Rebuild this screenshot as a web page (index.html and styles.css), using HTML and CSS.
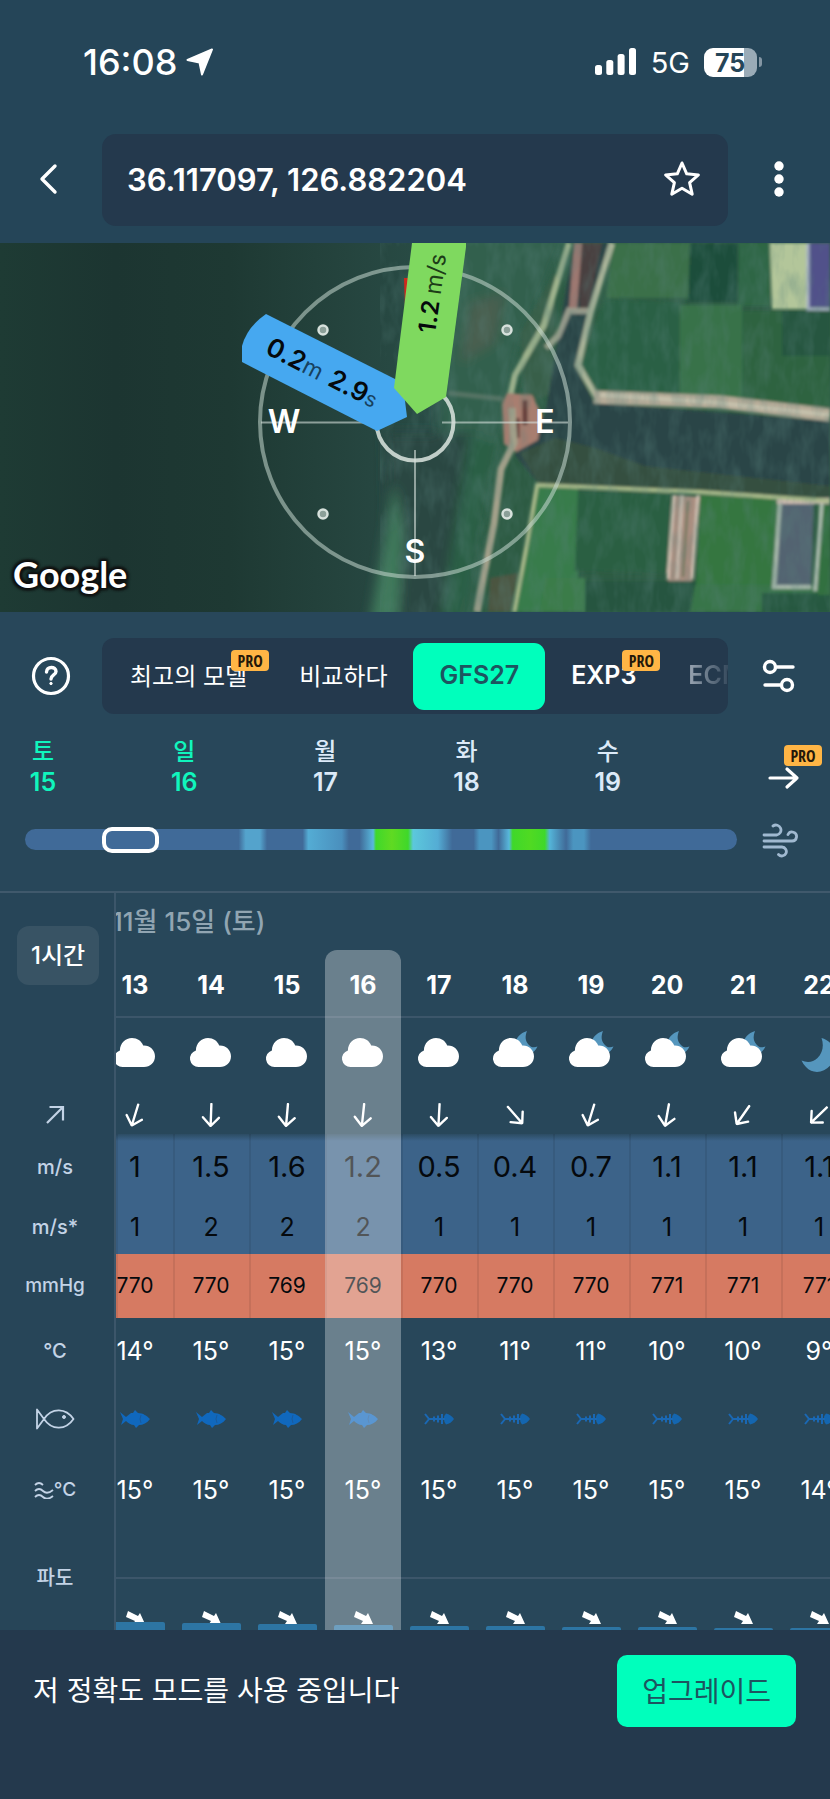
FILE: index.html
```html
<!DOCTYPE html>
<html lang="ko">
<head>
<meta charset="utf-8">
<meta name="viewport" content="width=device-width, initial-scale=1">
<title>36.117097, 126.882204</title>
<link rel="stylesheet" href="styles.css">
</head>
<body>
<svg class="defs" aria-hidden="true">
  <symbol id="cloud" viewBox="0 0 52 44"><path fill="#fff" d="M13.500 37A8.500 8.500 0 0 1 10.900 20.400C11 13.200 16.500 8 23 8c5.300 0 9.400 3 11.200 7.400C40.600 15 46 19.800 46 26.200S41 37 35 37z"/></symbol>
  <symbol id="cloud-moon" viewBox="0 0 52 44"><path fill="#5596bd" d="M38 1C31 3 27 8 26 14L40 25Q46 22 48.500 16.500C45 18 42 17.500 39.500 14.500C36 10.500 36 6 38 1z"/><path fill="#fff" d="M12.500 37A8.500 8.500 0 0 1 9.900 20.400C10 13.200 15.500 8 22 8c5.300 0 9.400 3 11.200 7.400C39.600 15 45 19.800 45 26.200S40 37 34 37z"/></symbol>
  <symbol id="moon" viewBox="0 0 52 44"><path fill="#5596bd" d="M28.500 8C39 11 44 20 40.500 30C36 42 21 46 13 37Q10 34 8.500 30.500C14 33 20 32.500 24.500 28C30 22.500 31 15 28.500 8z"/></symbol>
  <symbol id="arrow" viewBox="0 0 24 24"><path fill="none" stroke="#fff" stroke-width="2.400" stroke-linecap="round" stroke-linejoin="round" d="M12 1v22M4 14.500l8 8.500 8-8.500"/></symbol>
  <symbol id="fish" viewBox="0 0 30 18"><path fill="#1068bd" d="M0 2l6 5 5-4 2 0 2-3 3 3c5 0 9 3 12 6-3 4-7 6-11 6l-3 3-2-3c-3 0-6-2-8-4l-5 4 2-6z"/><path stroke="#1a5a9c" stroke-width="1" d="M21 5q-2 4 0 8" fill="none"/></symbol>
  <symbol id="bone" viewBox="0 0 30 18"><path fill="#1466b0" d="M20 9q0-4 2-5.500q5 1 8 5.500q-3 4.500-8 5.500q-2-1.500-2-5.500z"/><path stroke="#1a68b4" stroke-width="2" d="M1 4l4 5-4 5M5 9h16M10 6.500v5M14 5.500v7M18 4v10" fill="none"/></symbol>
  <symbol id="swell" viewBox="0 0 24 16"><path fill="#fff" d="M5 2l10 5 2-3 5 11-12 0 2-3-9-4z"/></symbol>
</svg>

<header class="top">
  <div class="status">
    <div class="clock">16:08
      <svg width="28" height="28" viewBox="0 0 28 28"><path fill="#fff" stroke="#fff" stroke-width="2" stroke-linejoin="round" d="M26 1.500L16 26.500 13.500 14.500 1.500 12z"/></svg>
    </div>
    <div class="signals">
      <svg width="41" height="28" viewBox="0 0 41 28" fill="#fff"><rect y="17" width="7" height="10" rx="2.500"/><rect x="11.300" y="12" width="7" height="15" rx="2.500"/><rect x="22.600" y="6" width="7" height="21" rx="2.500"/><rect x="34" width="7" height="27" rx="2.500"/></svg>
      <span class="net">5G</span>
      <span class="battery">75</span><span class="nub"></span>
    </div>
  </div>
  <div class="bar">
    <button class="icon" aria-label="뒤로"><svg width="20" height="32" viewBox="0 0 20 32"><path fill="none" stroke="#fff" stroke-width="3.400" stroke-linecap="round" stroke-linejoin="round" d="M17 3L4 16l13 13"/></svg></button>
    <div class="place"><span>36.117097, 126.882204</span>
      <button class="icon" aria-label="즐겨찾기"><svg width="38" height="38" viewBox="0 0 38 38"><path fill="none" stroke="#fff" stroke-width="3" stroke-linejoin="round" d="M19 3l4.700 10.800 11.700 1.100-8.800 7.800 2.600 11.500L19 28.200 8.800 34.200l2.600-11.500-8.800-7.800 11.700-1.100z"/></svg></button>
    </div>
    <button class="icon" aria-label="메뉴"><svg width="12" height="36" viewBox="0 0 12 36" fill="#fff"><circle cx="6" cy="5" r="4.700"/><circle cx="6" cy="18" r="4.700"/><circle cx="6" cy="31" r="4.700"/></svg></button>
  </div>
</header>

<section class="map" aria-label="지도">
<svg viewBox="0 0 830 369" preserveAspectRatio="xMidYMid slice" font-family="Inter, sans-serif">
  <defs>
    <linearGradient id="sea"><stop offset="0" stop-color="#1e3b34"/><stop offset=".25" stop-color="#1c3531"/><stop offset=".5" stop-color="#1e3933"/><stop offset=".8" stop-color="#264640"/><stop offset="1" stop-color="#2a4f48"/></linearGradient>
    <filter id="soft" x="-5%" y="-5%" width="110%" height="110%"><feGaussianBlur stdDeviation="1.400"/></filter>
    <filter id="softer" x="-20%" y="-20%" width="140%" height="140%"><feGaussianBlur stdDeviation="6"/></filter>
    <filter id="grain" x="0" y="0" width="100%" height="100%"><feTurbulence type="fractalNoise" baseFrequency=".07 .03" numOctaves="3" seed="4"/><feColorMatrix values="0 0 0 0 .1  0 0 0 0 .22  0 0 0 0 .2  1.800 0 0 0 -.7"/></filter>
  </defs>
  <rect width="830" height="369" fill="#2d5b43"/>
  <rect width="460" height="369" fill="url(#sea)"/>
  <g filter="url(#softer)">
    <path fill="#31604e" d="M440-10H570L520 110 490 260 470 380H440z"/>
    <path fill="#4a5f50" d="M470 60l35-10-10 50-35 20z"/>
    <path fill="#2c4742" d="M385 190h95l-10 80-30 110h-50z"/>
    <path fill="#3f7a5c" d="M395 240l8 50-5 90h-28l14-80z"/>
    <path fill="#2b5f45" d="M470 190l30 10-20 90-20 90h-20z"/>
  </g>
  <g filter="url(#soft)">
    <path fill="#375f49" d="M520 90l35-60v120l-30 10z"/>
    <path fill="#2c4447" d="M574 0h36L590 70 576 125l18 35 236 18v76l-290-12-25-30 30-40z"/>
    <path fill="#35503f" d="M520 210l35-15 40 10 50 18 185 20v12l-290-12z"/>
    <path fill="#3b704a" d="M613 0h77v55h-84z"/>
    <path fill="#1e4d3b" d="M690 0h48v59h-50z"/>
    <path fill="#2e6644" d="M738 0h32v63h-32z"/>
    <path fill="#b3c69a" d="M770 0h37v66h-35z"/>
    <path fill="#51518a" d="M809 0h21v64h-21z"/>
    <path fill="none" stroke="#aab3c6" stroke-width="3" d="M808 0v66h22"/>
    <path fill="#2b6144" d="M604 56l76 3v93l-82-3-18-25z"/>
    <path fill="#377248" d="M680 62h62v93h-62z"/>
    <path fill="#2e6441" d="M742 68h88v96l-88-7z"/>
    <path fill="#265741" d="M782 68h48v45h-48z"/>
    <path fill="#397b4b" d="M538 244l40 2v123h-62z"/>
    <path fill="#295f42" d="M578 248l92 2-3 80-92-2z"/>
    <path fill="#285541" d="M584 338h118v31H580z"/>
    <path fill="#3a7c48" d="M545 335h40v34h-45z"/>
    <path fill="#357641" d="M700 252l78 4-6 86h-76z"/>
    <path fill="#387548" d="M695 342h135v27H690z"/>
    <path fill="#25583f" d="M762 350h68v19h-68z"/>
    <path fill="#33703f" d="M818 262h12v90h-12z"/>
    <path fill="#a98e80" d="M673 252l27 2-8 84h-24z"/>
    <path stroke="#d3c2b4" stroke-width="3" d="M674 252l-6 84M682 252l-5 84M698 252l-6 84" fill="none"/>
    <path stroke="#667457" stroke-width="2" d="M688 258l-5 76" fill="none"/>
    <path fill="#536371" d="M780 258h34l-3 88h-38z"/>
    <path stroke="#a9b9ac" stroke-width="4" d="M780 258l-6 86h37M822 258l-7 90" fill="none"/>
    <path stroke="#c9b9af" stroke-width="6" d="M777 258h53" fill="none"/>
    <path fill="#49403f" d="M578 0h24l-14 68h-8z"/>
    <path stroke="#9d7871" stroke-width="8" d="M578 0l-5 66" fill="none"/>
    <path stroke="#b9b7a2" stroke-width="6" d="M568 68h22M570 65l-12 28-12 12" fill="none" opacity=".75"/>
    <path stroke="#9fb38d" stroke-width="6" fill="none" d="M569 0L544 82 515 132 509 158"/>
    <path stroke="#adb69a" stroke-width="6" fill="none" d="M612 0L591 68 578 122 596 153"/>
    <path stroke="#b6ab98" stroke-width="13" fill="none" d="M594 154L720 159 830 172"/>
    <path stroke="#c7c3ae" stroke-width="4" fill="none" d="M600 152L710 159 830 172"/>
    <path fill="#a87e70" d="M507 150l25 2 10 20-4 25-22 12-12-8-2-40z"/>
    <path stroke="#633b37" stroke-width="5" d="M525 157v25M517 175v20" fill="none"/>
    <path stroke="#a3a08a" stroke-width="7" fill="none" d="M512 165l2 35-13 26-7 55-11 55-6 33"/>
    <path stroke="#a8b98a" stroke-width="4" fill="none" d="M830 258L700 249 537 242 527 300 514 369"/>
    <path fill="#4c5541" d="M490 335l28-5-8 39h-22z"/>
    <path stroke="#6c8073" stroke-width="5" d="M448 150l55 6" fill="none" opacity=".6"/>
  </g>
  <rect x="380" width="450" height="369" filter="url(#grain)" opacity=".4"/>

  <g fill="none">
    <circle cx="415" cy="179" r="155" stroke="#c6d8d0" stroke-opacity=".55" stroke-width="4"/>
    <circle cx="415" cy="179" r="38.500" stroke="#dce5df" stroke-opacity=".85" stroke-width="4"/>
    <path stroke="#d5e0da" stroke-opacity=".6" stroke-width="2" d="M261 179.500H377M442 179.500H568M415 207V333"/>
    <g fill="#8b9f98" stroke="#d7e1dc" stroke-width="2.500"><circle cx="323" cy="87" r="4.500"/><circle cx="507" cy="87" r="4.500"/><circle cx="323" cy="271" r="4.500"/><circle cx="507" cy="271" r="4.500"/></g>
  </g>
  <path fill="#d0271c" d="M404 35h8v30h-7z"/>
  <path fill="#46a8f0" d="M266 71L395 136 404 150 407 174 377 188 242 119V103Q247 84 266 71z"/>
  <path fill="#7fd95f" d="M412 0H466V4L446 154 417 171 394 145z"/>
  <g fill="#fff" font-size="32" font-weight="600" text-anchor="middle"><text x="284" y="190">W</text><text x="545" y="190">E</text><text x="415" y="320">S</text></g>
  <g fill="#05090c" font-size="26"><text transform="translate(264 110) rotate(27)"><tspan font-weight="600">0.2</tspan><tspan font-size="23" fill="#17415f">m</tspan><tspan font-weight="600" dx="9">2.9</tspan><tspan font-size="21" fill="#17415f">s</tspan></text>
  <text transform="translate(435 91) rotate(-82)" font-size="24"><tspan font-weight="600">1.2</tspan><tspan font-size="23" fill="#1d3d18"> m/s</tspan></text></g>
</svg>
<span class="google">Google</span>
</section>

<section class="panel">
  <div class="bar models">
    <button class="icon" aria-label="도움말"><svg width="40" height="40" viewBox="0 0 40 40" fill="none" stroke="#fff"><circle cx="20" cy="20" r="17.500" stroke-width="3.200"/><path stroke-width="3.400" stroke-linecap="round" d="M15.500 16c0-6 9.500-6 9.500-.5 0 3.500-5 3.500-5 7.500"/><circle cx="20" cy="27.500" r="1.200" fill="#fff"/></svg></button>
    <div class="tabs">
      <button>최고의 모델<span class="pro">PRO</span></button><button>비교하다</button><button class="latin on">GFS27</button><button class="latin">EXP3<span class="pro">PRO</span></button><button class="latin last">ECMWF</button>
    </div>
    <button class="icon" aria-label="설정"><svg width="36" height="36" viewBox="0 0 36 36" fill="none" stroke="#fff" stroke-width="3.400" stroke-linecap="round"><circle cx="9" cy="9" r="5.500"/><path d="M16 9h16M4 27h15"/><circle cx="26" cy="27" r="5.500"/></svg></button>
  </div>
  <div class="timeline">
    <div class="days">
      <div class="we"><span>토</span><b>15</b></div><div class="we"><span>일</span><b>16</b></div><div><span>월</span><b>17</b></div><div><span>화</span><b>18</b></div><div><span>수</span><b>19</b></div>
    </div>
    <button class="icon next" aria-label="다음"><svg width="32" height="24" viewBox="0 0 32 24"><path fill="none" stroke="#fff" stroke-width="3.200" stroke-linecap="round" stroke-linejoin="round" d="M2 12h27M19 3l10 9-10 9"/></svg><span class="pro">PRO</span></button>
    <input type="range" min="0" max="1000" value="118" aria-label="시간">
    <button class="icon wind" aria-label="바람"><svg width="36" height="36" viewBox="0 0 36 36" fill="none" stroke="#a0b9d0" stroke-width="2.800" stroke-linecap="round"><path d="M2 13h12.500a5 5 0 1 0-3.500-9M2 19h28a4.500 4.500 0 1 0-4-6.500M2 25h18a4.500 4.500 0 1 1-3.500 7.500"/></svg></button>
  </div>
</section>

<main class="forecast">
<table>
  <colgroup><col class="c-label"><col class="c-first"><col span="9" class="c-hour"></colgroup>
  <tbody>
  <tr class="r-date"><th class="c-step" rowspan="2"><button class="step">1시간</button></th><td colspan="10"><div class="date">11월 15일 (토)</div></td></tr>
  <tr class="r-hour"><td><div>13</div></td><td><div>14</div></td><td><div>15</div></td><td><div>16</div></td><td><div>17</div></td><td><div>18</div></td><td><div>19</div></td><td><div>20</div></td><td><div>21</div></td><td><div>22</div></td></tr>
  <tr class="r-sky"><th></th><td><div><svg><use href="#cloud"/></svg></div></td><td><div><svg><use href="#cloud"/></svg></div></td><td><div><svg><use href="#cloud"/></svg></div></td><td><div><svg><use href="#cloud"/></svg></div></td><td><div><svg><use href="#cloud"/></svg></div></td><td><div><svg><use href="#cloud-moon"/></svg></div></td><td><div><svg><use href="#cloud-moon"/></svg></div></td><td><div><svg><use href="#cloud-moon"/></svg></div></td><td><div><svg><use href="#cloud-moon"/></svg></div></td><td><div><svg><use href="#moon"/></svg></div></td></tr>
  <tr class="r-dir"><th scope="row" aria-label="풍향"><svg width="20" height="20" viewBox="0 0 20 20"><path fill="none" stroke="#c3d3e6" stroke-width="2.200" d="M2 18L18 2M4.500 2H18v13.500"/></svg></th>
    <td><div><svg style="rotate:17deg"><use href="#arrow"/></svg></div></td><td><div><svg style="rotate:2deg"><use href="#arrow"/></svg></div></td><td><div><svg style="rotate:5deg"><use href="#arrow"/></svg></div></td><td><div><svg style="rotate:6deg"><use href="#arrow"/></svg></div></td><td><div><svg style="rotate:3deg"><use href="#arrow"/></svg></div></td><td><div><svg style="rotate:-41deg"><use href="#arrow"/></svg></div></td><td><div><svg style="rotate:17deg"><use href="#arrow"/></svg></div></td><td><div><svg style="rotate:10deg"><use href="#arrow"/></svg></div></td><td><div><svg style="rotate:35deg"><use href="#arrow"/></svg></div></td><td><div><svg style="rotate:46deg"><use href="#arrow"/></svg></div></td></tr>
  <tr class="r-wind"><th scope="row">m/s</th><td><div>1</div></td><td><div>1.5</div></td><td><div>1.6</div></td><td><div>1.2</div></td><td><div>0.5</div></td><td><div>0.4</div></td><td><div>0.7</div></td><td><div>1.1</div></td><td><div>1.1</div></td><td><div>1.1</div></td></tr>
  <tr class="r-gust"><th scope="row">m/s*</th><td><div>1</div></td><td><div>2</div></td><td><div>2</div></td><td><div>2</div></td><td><div>1</div></td><td><div>1</div></td><td><div>1</div></td><td><div>1</div></td><td><div>1</div></td><td><div>1</div></td></tr>
  <tr class="r-press"><th scope="row">mmHg</th><td><div>770</div></td><td><div>770</div></td><td><div>769</div></td><td><div>769</div></td><td><div>770</div></td><td><div>770</div></td><td><div>770</div></td><td><div>771</div></td><td><div>771</div></td><td><div>771</div></td></tr>
  <tr class="r-temp"><th scope="row">°C</th><td><div>14°</div></td><td><div>15°</div></td><td><div>15°</div></td><td><div>15°</div></td><td><div>13°</div></td><td><div>11°</div></td><td><div>11°</div></td><td><div>10°</div></td><td><div>10°</div></td><td><div>9°</div></td></tr>
  <tr class="r-fish"><th scope="row" aria-label="물고기"><svg width="40" height="22" viewBox="0 0 40 22" fill="none" stroke="#c3d3e6" stroke-width="1.800"><path stroke-linejoin="round" d="M2 1.500v19L9 11zM9 11C17-1 31 0 38.500 11 31 22 17 23 9 11z"/><circle cx="29" cy="9" r="1.500" fill="#c3d3e6" stroke-width="1"/></svg></th>
    <td><div><svg><use href="#fish"/></svg></div></td><td><div><svg><use href="#fish"/></svg></div></td><td><div><svg><use href="#fish"/></svg></div></td><td><div><svg><use href="#fish"/></svg></div></td><td><div><svg><use href="#bone"/></svg></div></td><td><div><svg><use href="#bone"/></svg></div></td><td><div><svg><use href="#bone"/></svg></div></td><td><div><svg><use href="#bone"/></svg></div></td><td><div><svg><use href="#bone"/></svg></div></td><td><div><svg><use href="#bone"/></svg></div></td></tr>
  <tr class="r-water"><th scope="row"><span class="sea"><svg width="20" height="18" viewBox="0 0 20 18" fill="none" stroke="#c3d3e6" stroke-width="1.800"><path d="M1 4q4-4 8 0M1 10q4-4 8 0t10-1M1 16q4-4 8 0t10-1"/></svg>°C</span></th><td><div>15°</div></td><td><div>15°</div></td><td><div>15°</div></td><td><div>15°</div></td><td><div>15°</div></td><td><div>15°</div></td><td><div>15°</div></td><td><div>15°</div></td><td><div>15°</div></td><td><div>14°</div></td></tr>
  <tr class="r-gap"><th scope="rowgroup" rowspan="2">파도</th><td colspan="10"></td></tr>
  <tr class="r-wave"><td><div><svg><use href="#swell"/></svg><i style="height:8px"></i></div></td><td><div><svg><use href="#swell"/></svg><i style="height:7px"></i></div></td><td><div><svg><use href="#swell"/></svg><i style="height:6px"></i></div></td><td><div><svg><use href="#swell"/></svg><i style="height:5px"></i></div></td><td><div><svg><use href="#swell"/></svg><i style="height:4px"></i></div></td><td><div><svg><use href="#swell"/></svg><i style="height:4px"></i></div></td><td><div><svg><use href="#swell"/></svg><i style="height:3px"></i></div></td><td><div><svg><use href="#swell"/></svg><i style="height:3px"></i></div></td><td><div><svg><use href="#swell"/></svg><i style="height:2px"></i></div></td><td><div><svg><use href="#swell"/></svg><i style="height:2px"></i></div></td></tr>
  </tbody>
</table>
<div class="now"></div>
</main>

<footer class="notice"><p>저 정확도 모드를 사용 중입니다</p><button>업그레이드</button></footer>
</body>
</html>
```
FILE: styles.css
```css
* { box-sizing: border-box; }
body {
  margin: 0;
  background: #24394d;
  color: #fff;
  font-family: Inter, "Noto Sans CJK KR", sans-serif;
  overflow-x: hidden;
}
button { font: inherit; color: inherit; background: none; border: 0; padding: 0; }
svg { display: block; }
.defs { position: absolute; width: 0; height: 0; }
.icon { display: flex; align-items: center; justify-content: center; }

.top { background: #254558; padding-bottom: 17px; }
.status {
  display: flex;
  justify-content: space-between;
  align-items: center;
  height: 124px;
  padding: 0 68px 0 83px;
}
.clock { display: flex; align-items: center; gap: 9px; font-size: 36px; font-weight: 500; }
.signals { display: flex; align-items: center; }
.net { margin: 0 14px 0 15px; font-size: 29px; }
.battery {
  width: 53px;
  height: 29px;
  border-radius: 9px;
  background: linear-gradient(90deg, #fff 75%, #9aabb7 75%);
  color: #254558;
  font-size: 25px;
  line-height: 30px;
  font-weight: 700;
  padding-left: 11px;
}
.nub { width: 3px; height: 10px; margin-left: 2px; border-radius: 0 3px 3px 0; background: #8496a4; }
.bar { display: grid; grid-template-columns: 102px 1fr 102px; align-items: stretch; }
.top .bar { margin-top: 10px; }
.top .bar > .icon { padding-bottom: 2px; }
.top .bar > .icon:first-child { padding-right: 6px; }
.place {
  display: flex;
  align-items: center;
  justify-content: space-between;
  height: 92px;
  padding: 0 27px 2px 25px;
  border-radius: 14px;
  background: #24394d;
  font-size: 31px;
  font-weight: 600;
}

.map { position: relative; height: 369px; }
.map > svg { width: 100%; height: 100%; }
.google {
  position: absolute;
  left: 13px;
  bottom: 14px;
  font: 700 36px/48px Lato, sans-serif;
  text-shadow: 0 0 3px #111, 0 0 3px #111, 2px 2px 3px #111, -2px -2px 3px #111, 2px -2px 3px #111, -2px 2px 3px #111;
}

.panel { background: #28475a; padding: 26px 0 33px; }
.tabs {
  display: flex;
  align-items: center;
  height: 76px;
  padding-left: 2px;
  border-radius: 12px;
  background: #24394d;
  overflow: hidden;
  font-size: 24px;
  font-weight: 400;
}
.tabs button { position: relative; flex: none; height: 67px; padding: 0 26px 4px; white-space: nowrap; }
.tabs .latin { padding-bottom: 2px; font-size: 25px; font-weight: 600; }
.tabs .on { border-radius: 11px; background: #00ffbc; color: #1d5560; }
.tabs .last {
  background: linear-gradient(90deg, #9aa6b3 26px, #24394d 74px) text;
  color: transparent;
}
.pro {
  position: absolute;
  top: 7px;
  right: 4px;
  width: 38px;
  height: 21px;
  border-radius: 4px;
  background: #ffb545;
  color: #24180a;
  text-align: center;
  font: 700 16px/22px "Liberation Sans Narrow", "Open Sans Condensed", Roboto, sans-serif;
}
.latin .pro { right: 2px; }
.timeline { display: grid; grid-template-columns: 1fr 93px; padding: 23px 0 0 25px; }
.days { display: grid; grid-template-columns: repeat(5, 1fr); padding-right: 6px; color: #dceaf8; font-size: 24px; line-height: 30px; }
.days div { width: 36px; text-align: center; }
.days span, .days b { display: block; font-weight: 500; }
.days b { font-weight: 600; font-size: 25px; }
.next { position: relative; padding: 22px 0 0 0; }
.days .we { color: #10f5bd; }
.next .pro { top: 8px; right: 8px; }
.wind { padding-right: 7px; margin-top: 25px; }
input[type="range"] {
  -webkit-appearance: none;
  appearance: none;
  align-self: center;
  width: 100%;
  height: 21px;
  margin: 24px 0 0;
  border-radius: 11px;
  background: linear-gradient(90deg, #406a98 30%, #54a3cc 31% 33%, #406a98 34% 39%, #54acd4 39.800%, #4a8fbd 44.500%, #406a98 45.500% 47%, #58b8dc 48.900%, #3fd82a 49.300%, #60da22 51.500%, #3fd82a 53.800%, #5cc8dc 54.500%, #54acd4 58%, #406a98 60% 63%, #4b95c0 63.800% 65.500%, #406a98 66.500%, #58b8dc 68%, #3fd82a 68.500%, #50da22 71%, #3fd82a 73%, #54b4d8 73.700%, #406a98 76%, #4b95c0 77% 78.500%, #406a98 79.500%);
}
input[type="range"]::-webkit-slider-thumb {
  -webkit-appearance: none;
  width: 57px;
  height: 26px;
  border: 4px solid #fff;
  border-radius: 10px;
  background: #406a98;
}

.forecast { position: relative; overflow: hidden; border-top: 2px solid #40596c; background: #28475a; }
table { table-layout: fixed; width: 857px; border-collapse: separate; border-spacing: 0; }
.c-label { width: 116px; }
.c-first { width: 57px; }
.c-hour { width: 76px; }
th, td { padding: 0; }
th {
  position: relative;
  z-index: 1;
  padding-right: 4px;
  background: #274558;
  border-right: 2px solid #3c566a;
  color: #c3d3e6;
  font-size: 20px;
  font-weight: 500;
  line-height: 24px;
}
.c-step { padding: 0 0 0 2px; }
th svg { margin: 0 auto; }
td div { display: flex; align-items: center; justify-content: center; width: 76px; height: 100%; line-height: 28px; }
td:nth-child(2) div, .r-hour td:first-child div, .r-wave td:first-child div { margin-left: -19px; }
.r-hour td:nth-child(2) div, .r-wave td:nth-child(2) div { margin-left: 0; }
.r-date { height: 57px; }
td .date { justify-content: flex-start; width: auto; padding-left: 15px; color: #91a5b2; font-size: 26px; font-weight: 500; }
.step { width: 82px; height: 59px; border-radius: 12px; background: #385364; color: #fff; font-size: 24px; }
.r-hour { height: 68px; font-size: 25px; font-weight: 700; }
.r-hour td { border-bottom: 2px solid #3c566a; padding-top: 3px; }
.r-sky { height: 68px; }
.r-sky svg { width: 52px; height: 44px; }
.r-dir { height: 48px; }
.r-dir th, .r-dir td { padding-top: 10px; }
.r-dir td svg { width: 24px; height: 24px; }
.r-wind { height: 66px; font-size: 29px; }
.r-gust { height: 54px; font-size: 25px; }
.r-wind td, .r-gust td, .r-press td { color: #05090d; box-shadow: inset 2px 0 rgba(0, 0, 0, .08); }
.r-wind td { background: linear-gradient(#2c4c63, #3c6389 7px); }
.r-gust td { background: #3c6389; }
.r-press { height: 64px; font-size: 21px; }
.r-press th { font-size: 19px; }
.r-press td { background: #d67a62; }
.r-temp { height: 66px; font-size: 25px; }
.r-fish { height: 70px; }
.r-fish td svg { width: 30px; height: 18px; }
.r-water { height: 72px; font-size: 25px; }
.r-water th { font-size: 19px; }
.sea { display: flex; align-items: center; justify-content: center; }
.sea svg { margin: 0; }
.r-gap { height: 53px; }
.r-gap td { border-bottom: 2px solid #3c566a; }
.r-wave { height: 51px; }
.r-wave div { position: relative; height: 51px; }
.r-wave svg { width: 24px; height: 16px; margin-top: 24px; }
.r-wave i { position: absolute; bottom: 0; left: 9px; width: 59px; border-radius: 2px 2px 0 0; background: #2d75a3; }
.now {
  position: absolute;
  left: 325px;
  top: 57px;
  bottom: 0;
  width: 76px;
  border-radius: 12px 12px 0 0;
  background: rgba(255, 255, 255, .31);
}

.notice { display: flex; align-items: center; justify-content: space-between; padding: 25px 34px 77px 33px; font-size: 28px; }
.notice p { margin: 0; padding-bottom: 4px; }
.notice button { height: 72px; padding: 0 25px 3px; border-radius: 10px; background: #00ffbc; color: #1d5560; }
```
